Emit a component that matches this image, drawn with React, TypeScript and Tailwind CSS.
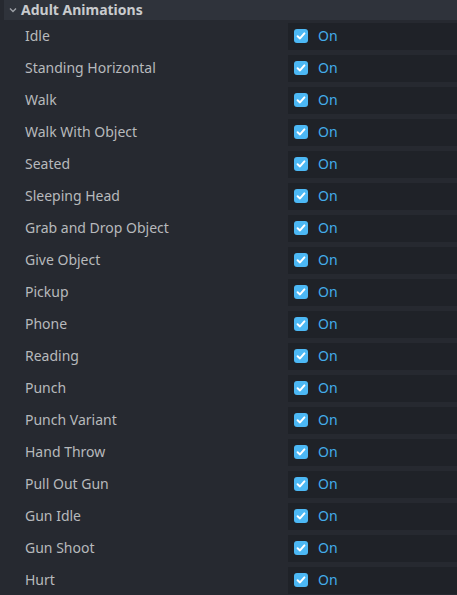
import React from "react";

const items = [
  "Idle",
  "Standing Horizontal",
  "Walk",
  "Walk With Object",
  "Seated",
  "Sleeping Head",
  "Grab and Drop Object",
  "Give Object",
  "Pickup",
  "Phone",
  "Reading",
  "Punch",
  "Punch Variant",
  "Hand Throw",
  "Pull Out Gun",
  "Gun Idle",
  "Gun Shoot",
  "Hurt",
];

function Check() {
  return (
    <div className="w-[14px] h-[14px] rounded-[3px] bg-[#4cb8f5] flex items-center justify-center">
      <svg width="10" height="10" viewBox="0 0 10 10">
        <path d="M1.6 5.2 L4 7.4 L8.4 2.4" fill="none" stroke="white" strokeWidth="2" strokeLinecap="round" strokeLinejoin="round" />
      </svg>
    </div>
  );
}

export default function App() {
  return (
    <div
      className="w-[457px] h-[595px] bg-[#262930] overflow-hidden"
      style={{ fontFamily: '"Noto Sans", sans-serif' }}
    >
      <div className="h-[20px] ml-[4px] bg-[#2f333b] flex items-center pl-[4px]">
        <svg width="10" height="10" viewBox="0 0 10 10" className="mr-[3px]">
          <path d="M2 3.5 L5 6.5 L8 3.5" fill="none" stroke="#9da1a7" strokeWidth="1.4" />
        </svg>
        <span className="text-[14px] font-bold text-[#c9cbce] leading-none">Adult Animations</span>
      </div>
      <div className="flex flex-col">
        {items.map((name) => (
          <div key={name} className="h-[32px] flex items-center">
            <div className="w-[288px] pl-[25px] text-[14px] text-[#b7b9bc] leading-none">{name}</div>
            <div className="flex-1 h-[27px] bg-[#1f2228] flex items-center pl-[6px] gap-[10px]">
              <Check />
              <span className="text-[14px] text-[#43acea] leading-none">On</span>
            </div>
          </div>
        ))}
      </div>
    </div>
  );
}
